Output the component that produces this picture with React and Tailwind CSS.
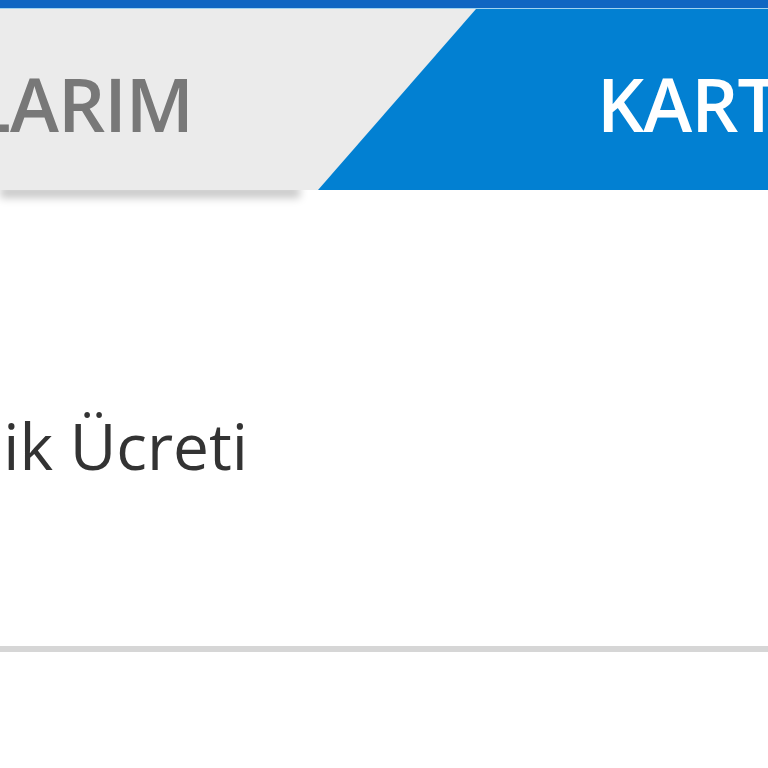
export default function App() {
  return (
    <div className="w-[768px] h-[768px] overflow-hidden bg-white font-['Open_Sans',sans-serif]">
      {/* top strip */}
      <div className="h-[9px] bg-[#0f66c2] border-b border-[#9fd3f0]" />

      {/* tabs */}
      <div className="relative h-[181px] bg-[#0280d2]">
        {/* shadow under the inactive tab */}
        <div className="absolute left-0 bottom-0 w-[300px] h-[12px] shadow-[0_8px_9px_rgba(0,0,0,0.22)]" />
        <div className="absolute inset-0 w-[476px] bg-[#ebebeb] [clip-path:polygon(0_0,476px_0,318px_100%,0_100%)] pt-[58px]">
          <div className="w-[193px] flex justify-end">
            <span className="whitespace-nowrap text-[74px] leading-none font-semibold text-[#787878] tracking-[-1px]">
              HESAPLARIM
            </span>
          </div>
        </div>
        <div className="absolute left-[597px] top-[58px] whitespace-nowrap text-[74px] leading-none font-semibold text-white tracking-[-1px]">
          KARTLARIM
        </div>
      </div>

      {/* row */}
      <div className="h-[462px] border-b-[6px] border-[#d6d6d6] pt-[224px]">
        <div className="w-[248px] flex justify-end">
          <span className="whitespace-nowrap text-[64px] leading-none text-[#333333]">
            Üyelik Ücreti
          </span>
        </div>
      </div>
    </div>
  )
}
